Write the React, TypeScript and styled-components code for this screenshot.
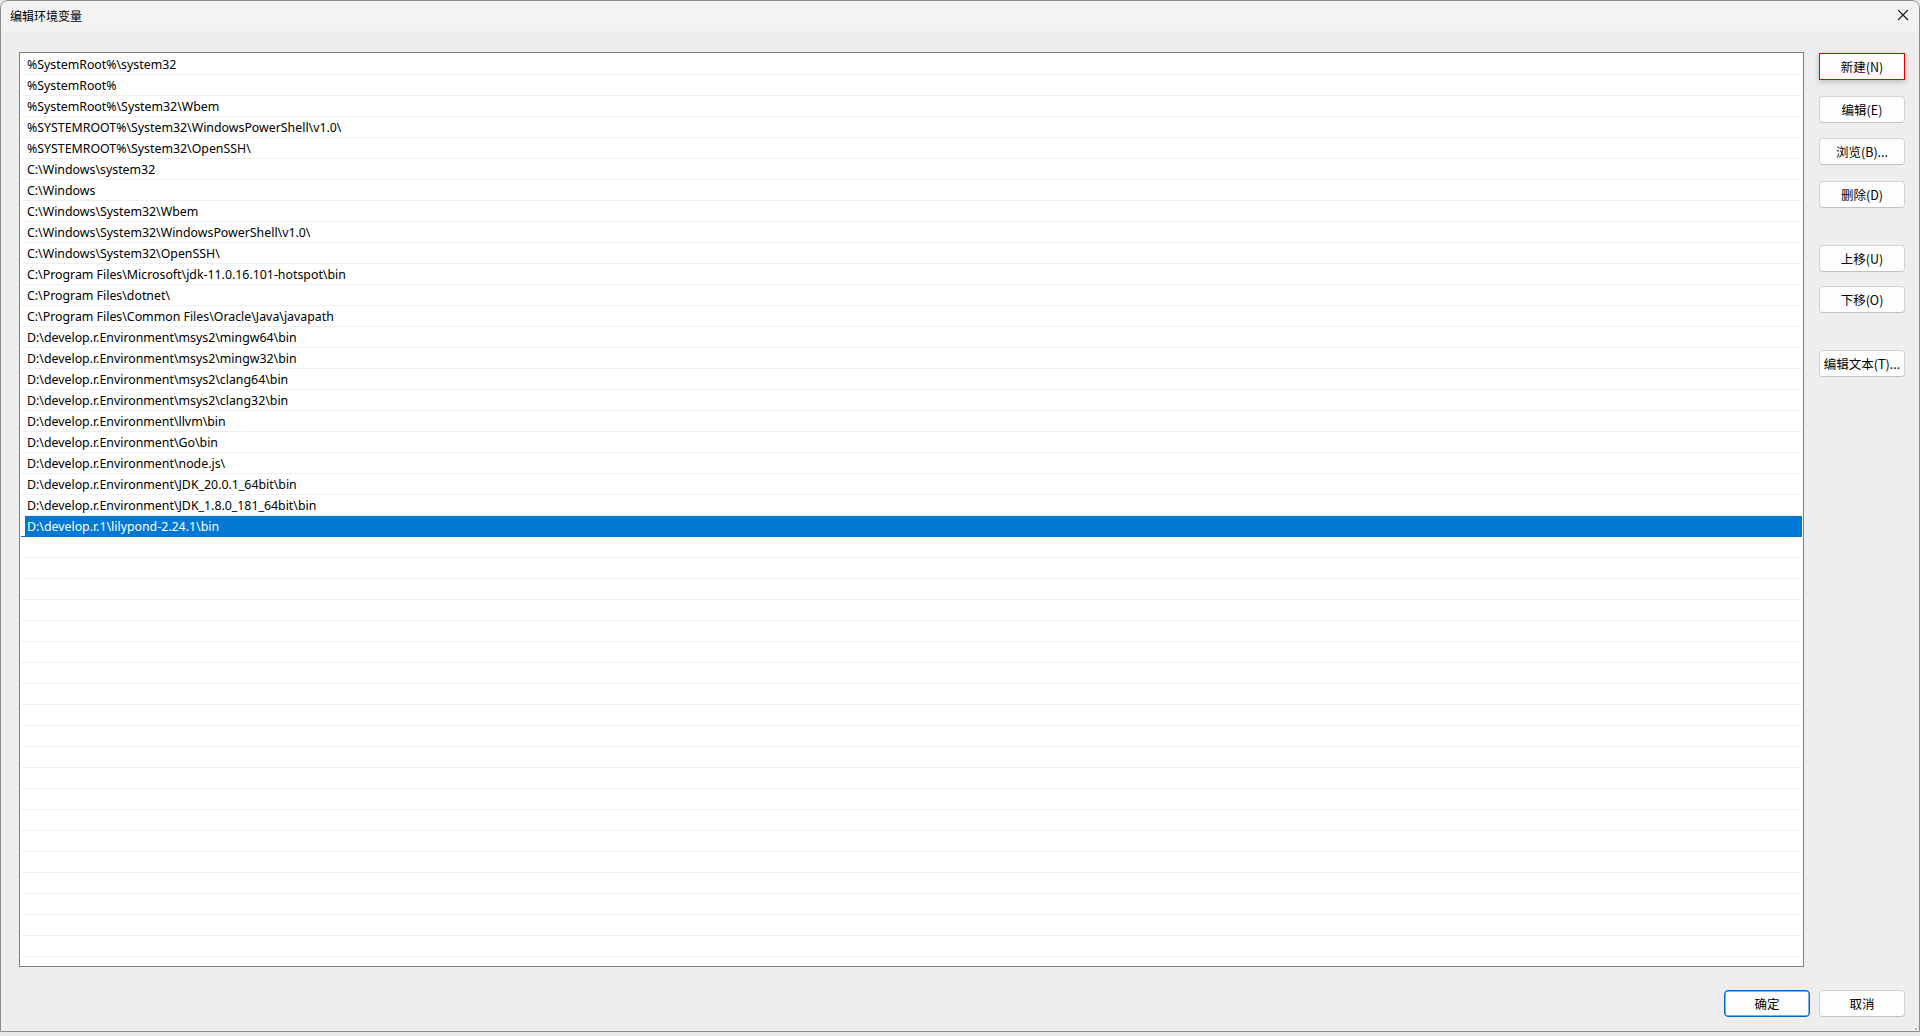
import styled, { createGlobalStyle } from "styled-components";

const GlobalStyle = createGlobalStyle`
  html, body {
    margin: 0;
    padding: 0;
    background: #e9e9e9;
  }
  * {
    box-sizing: border-box;
  }
`

const paths = [
  "%SystemRoot%\\system32",
  "%SystemRoot%",
  "%SystemRoot%\\System32\\Wbem",
  "%SYSTEMROOT%\\System32\\WindowsPowerShell\\v1.0\\",
  "%SYSTEMROOT%\\System32\\OpenSSH\\",
  "C:\\Windows\\system32",
  "C:\\Windows",
  "C:\\Windows\\System32\\Wbem",
  "C:\\Windows\\System32\\WindowsPowerShell\\v1.0\\",
  "C:\\Windows\\System32\\OpenSSH\\",
  "C:\\Program Files\\Microsoft\\jdk-11.0.16.101-hotspot\\bin",
  "C:\\Program Files\\dotnet\\",
  "C:\\Program Files\\Common Files\\Oracle\\Java\\javapath",
  "D:\\develop.r.Environment\\msys2\\mingw64\\bin",
  "D:\\develop.r.Environment\\msys2\\mingw32\\bin",
  "D:\\develop.r.Environment\\msys2\\clang64\\bin",
  "D:\\develop.r.Environment\\msys2\\clang32\\bin",
  "D:\\develop.r.Environment\\llvm\\bin",
  "D:\\develop.r.Environment\\Go\\bin",
  "D:\\develop.r.Environment\\node.js\\",
  "D:\\develop.r.Environment\\JDK_20.0.1_64bit\\bin",
  "D:\\develop.r.Environment\\JDK_1.8.0_181_64bit\\bin",
  "D:\\develop.r.1\\lilypond-2.24.1\\bin",
]

const TOTAL_ROWS = 43
const SELECTED = 22

const Window = styled.div`
  position: relative;
  width: 1920px;
  height: 1032px;
  display: flex;
  flex-direction: column;
  background: #eeeeee;
  border: 1px solid #8d8d8d;
  border-radius: 8px 8px 0 0;
  overflow: hidden;
  font-family: "Noto Sans", "Noto Sans CJK SC", sans-serif;
  color: #000;
`

const TitleBar = styled.div`
  height: 30px;
  flex: none;
  display: flex;
  align-items: center;
  justify-content: space-between;
  background: #f3f3f3;
  padding-left: 9px;
  padding-right: 9px;
`

const Title = styled.div`
  font-family: "Noto Sans CJK SC", sans-serif;
  font-size: 12px;
  margin-top: -2px;
`

const CloseButton = styled.div`
  width: 14px;
  height: 14px;
  display: flex;
  align-items: center;
  justify-content: center;
  margin-top: -2px;
`

const Content = styled.div`
  flex: 1;
  display: flex;
  flex-direction: column;
  padding: 21px 14px 14px 18px;
`

const Main = styled.div`
  display: flex;
  gap: 15px;
`

const ListBox = styled.div`
  width: 1785px;
  height: 915px;
  background: #fff;
  border: 1px solid #7b7f87;
  padding-top: 1px;
  overflow: hidden;
`

const Row = styled.div`
  height: 21px;
  margin: 0 1px;
  border-bottom: 1px solid ${p => (p.$selected ? "#0078d4" : "#efefef")};
  display: flex;
`

const Cell = styled.div`
  flex: 1;
  margin-left: 4px;
  padding-left: 2px;
  padding-top: 1px;
  font-size: 12.35px;
  line-height: 19px;
  white-space: nowrap;
  background: ${p => (p.$selected ? "#0078d4" : "transparent")};
  color: ${p => (p.$selected ? "#fff" : "#000")};
`

const SideColumn = styled.div`
  width: 86px;
  display: flex;
  flex-direction: column;
`

const Button = styled.button`
  width: 86px;
  height: 27px;
  margin-top: ${p => p.$top || 0}px;
  padding: 0;
  font-family: "Noto Sans CJK SC", sans-serif;
  font-size: 12.5px;
  color: #000;
  background: #fdfdfd;
  border: 1px solid #d3d3d3;
  border-bottom-color: #c2c2c2;
  border-radius: 4px;
`

const FocusButton = styled(Button)`
  border: 1px solid #e00000;
  border-radius: 0;
  box-shadow: 0 2px 6px rgba(0, 0, 0, 0.22);
`

const DefaultButton = styled(Button)`
  border: 1px solid #0067c0;
  box-shadow: inset 0 0 0 0.5px #0067c0;
`

const Footer = styled.div`
  margin-top: 23px;
  display: flex;
  justify-content: flex-end;
  gap: 9px;
`

const Grip = styled.div`
  position: absolute;
  right: 1px;
  bottom: 1px;
  width: 10px;
  height: 10px;
`

export default function App() {
  const rows = Array.from({ length: TOTAL_ROWS }, (_, i) => paths[i] ?? "")

  return <>
    <GlobalStyle />
    <Window>
      <TitleBar>
        <Title>编辑环境变量</Title>
        <CloseButton>
          <svg width="12" height="12" viewBox="0 0 12 12">
            <path d="M1 1L11 11M11 1L1 11" stroke="#1a1a1a" strokeWidth="1.1" />
          </svg>
        </CloseButton>
      </TitleBar>
      <Content>
        <Main>
          <ListBox>
            {rows.map((text, i) =>
              <Row key={i} $selected={i === SELECTED}>
                <Cell $selected={i === SELECTED}>{text}</Cell>
              </Row>
            )}
          </ListBox>
          <SideColumn>
            <FocusButton $top={1}>新建(N)</FocusButton>
            <Button $top={16}>编辑(E)</Button>
            <Button $top={15}>浏览(B)...</Button>
            <Button $top={16}>删除(D)</Button>
            <Button $top={37}>上移(U)</Button>
            <Button $top={14}>下移(O)</Button>
            <Button $top={37}>编辑文本(T)...</Button>
          </SideColumn>
        </Main>
        <Footer>
          <DefaultButton>确定</DefaultButton>
          <Button>取消</Button>
        </Footer>
      </Content>
      <Grip>
        <svg width="10" height="10" viewBox="0 0 10 10">
          <rect x="7" y="1" width="2" height="2" fill="#b5b5b5" />
          <rect x="4" y="4" width="2" height="2" fill="#b5b5b5" />
          <rect x="7" y="4" width="2" height="2" fill="#b5b5b5" />
          <rect x="1" y="7" width="2" height="2" fill="#b5b5b5" />
          <rect x="4" y="7" width="2" height="2" fill="#b5b5b5" />
          <rect x="7" y="7" width="2" height="2" fill="#b5b5b5" />
        </svg>
      </Grip>
    </Window>
  </>
}
